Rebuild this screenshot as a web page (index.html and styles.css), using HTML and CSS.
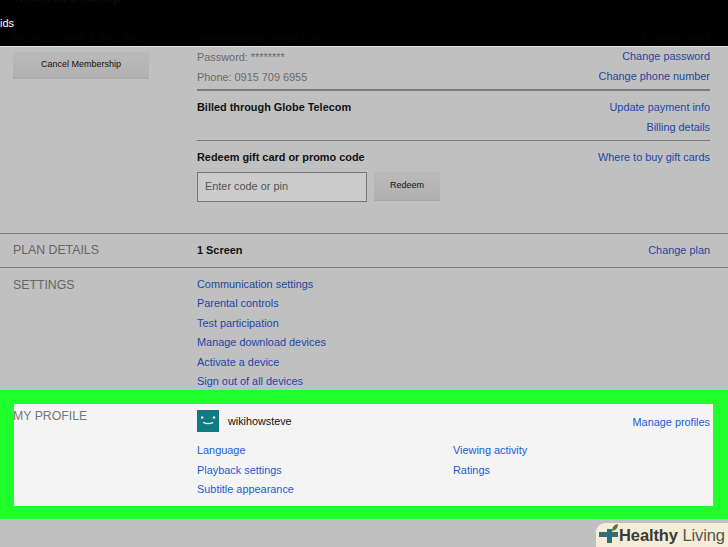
FILE: index.html
```html
<!DOCTYPE html>
<html lang="en">
<head>
<meta charset="utf-8">
<title>Account</title>
<link rel="stylesheet" href="styles.css">
</head>
<body>
<header class="topbar">
  <div class="topbar-title">Membership</div>
  <div class="topbar-kids">ids</div>
  <div class="topbar-ghost">
    <span class="ghost-label">MEMBERSHIP &amp; BILLING</span>
    <span class="ghost-email">wikihowsteve@gmail.com</span>
    <span class="ghost-link">Change email</span>
  </div>
</header>
<main class="page">
  <section class="row row-member">
    <div class="side"><button class="btn btn-cancel">Cancel Membership</button></div>
    <div class="main">
      <div class="pair pair-account">
        <div class="muted-lines"><p>Password: ********</p><p>Phone: 0915 709 6955</p></div>
        <div class="links right"><a>Change password</a><a>Change phone number</a></div>
      </div>
      <div class="pair pair-billed">
        <strong>Billed through Globe Telecom</strong>
        <div class="links right"><a>Update payment info</a><a>Billing details</a></div>
      </div>
      <div class="pair pair-redeem">
        <div>
          <strong class="redeem-title">Redeem gift card or promo code</strong>
          <div class="redeem-form">
            <div class="code-input">Enter code or pin</div>
            <button class="btn btn-redeem">Redeem</button>
          </div>
        </div>
        <div class="links right"><a>Where to buy gift cards</a></div>
      </div>
    </div>
  </section>
  <section class="row row-plan">
    <div class="side label">PLAN DETAILS</div>
    <div class="main pair"><strong>1 Screen</strong><div class="links right"><a>Change plan</a></div></div>
  </section>
  <section class="row row-settings">
    <div class="side label">SETTINGS</div>
    <div class="main links">
      <a>Communication settings</a><a>Parental controls</a><a>Test participation</a><a>Manage download devices</a><a>Activate a device</a><a>Sign out of all devices</a>
    </div>
  </section>
  <section class="highlight">
    <div class="panel">
      <div class="side label label-profile">MY PROFILE</div>
      <div class="main">
        <div class="pair profile-head">
          <div class="profile-id">
            <svg class="avatar" viewBox="0 0 22 22" aria-hidden="true">
              <rect width="22" height="22" fill="#0f7a80"/>
              <circle cx="5.2" cy="7.6" r="1.3" fill="#e8f4f4"/>
              <circle cx="17" cy="7.6" r="1.3" fill="#e8f4f4"/>
              <path d="M6.6 12.7Q11 14.6 15.8 12.7" fill="none" stroke="#f2f8f8" stroke-width="1.4" stroke-linecap="round"/>
            </svg>
            <span class="profile-name">wikihowsteve</span>
          </div>
          <div class="links right manage"><a>Manage profiles</a></div>
        </div>
        <div class="profile-links">
          <div class="links"><a>Language</a><a>Playback settings</a><a>Subtitle appearance</a></div>
          <div class="links"><a>Viewing activity</a><a>Ratings</a></div>
        </div>
      </div>
    </div>
  </section>
</main>
<aside class="badge">
  <svg class="badge-icon" viewBox="0 0 20 22" aria-hidden="true">
    <path d="M8 5h5v3h6v5h-6v6H8v-6H0V8h8z" fill="#2f6f78"/>
    <path d="M13 7Q13 1 19 0Q19 6 13 7z" fill="#4f7a3a"/>
  </svg>
  <span class="badge-text"><b>Healthy</b> Living</span>
</aside>
</body>
</html>
```
FILE: styles.css
```css
* { box-sizing: border-box; }
html, body { margin: 0; padding: 0; }
body {
  width: 728px;
  height: 547px;
  overflow: hidden;
  background: #c0c0c0;
  font-family: "Liberation Sans", Arial, sans-serif;
  font-size: 10.900px;
  color: #6a6a6a;
  position: relative;
}
p { margin: 0; }
a { color: #2146a6; display: block; }
strong { color: #111; font-weight: 700; display: block; }

.topbar {
  height: 47px;
  background: #000;
  border-bottom: 1px solid #e2e2e2;
  color: #fff;
  overflow: hidden;
}
.topbar-title { height: 15px; margin-top: -13px; padding-left: 13px; font-size: 20px; line-height: 16px; color: #0a0a0a; }
.topbar-kids { height: 16px; margin-top: 13px; font-size: 11px; line-height: 16px; }
.topbar-ghost { display: flex; margin-top: 0; padding: 0 18px 0 13px; color: #060606; line-height: 14px; }
.ghost-label { width: 184px; }
.ghost-link { margin-left: auto; }

.page { display: flex; flex-direction: column; }
.row { display: flex; padding: 0 18px 0 13px; }
.side { width: 184px; flex: none; }
.main { flex: 1; min-width: 0; }
.label { font-size: 12.300px; color: #666; line-height: 16px; }

.pair { display: flex; justify-content: space-between; align-items: flex-start; }
.links { line-height: 19.500px; }
.right { text-align: right; }

.btn {
  font-family: inherit;
  border: 0;
  color: #111;
  padding: 0;
  background: linear-gradient(#bababa, #b0b0b0);
  box-shadow: 0 1px 0 #a8a8a8;
  font-size: 9px;
}
.btn-cancel { width: 136px; height: 26px; margin-top: 5px; padding-bottom: 2px; }

.row-member { height: 186px; }
.pair-account { padding-top: 0; height: 44px; border-bottom: 2px solid #7b7b7b; line-height: 20px; }
.muted-lines p { line-height: 20px; }
.pair-billed { padding-top: 6px; height: 50px; border-bottom: 1px solid #7b7b7b; line-height: 20px; }
.pair-billed .links { line-height: 20px; }
.pair-billed strong { line-height: 20px; }
.pair-redeem { padding-top: 7px; line-height: 20px; }
.redeem-title { margin-top: -1px; }
.redeem-form { display: flex; align-items: flex-start; gap: 7px; margin-top: 5px; }
.code-input {
  width: 170px;
  height: 30px;
  padding-left: 7px;
  line-height: 27px;
  background: #cbcbcb;
  border: 1px solid #777;
  color: #555;
}
.btn-redeem { width: 66px; height: 28px; padding-bottom: 2px; }

.row-plan, .row-settings { border-top: 1px solid #7b7b7b; }
.row-plan { height: 34px; padding-top: 8px; margin-top: 0; line-height: 17px; }
.row-plan .links { line-height: 17px; }
.row-settings { height: 123px; padding-top: 6.700px; }
.row-settings .side { padding-top: 2px; }
.row-settings .links { line-height: 19.500px; }
.row-plan .side { line-height: 17px; }

.highlight { background: #1eff2c; height: 129px; padding: 14px 15px 13px 14px; }
.panel { display: flex; height: 102px; background: #f4f4f4; padding-right: 3px; }
.panel a { color: #1a5cd6; }
.label-profile { width: 183px; padding-top: 4px; color: #777; text-indent: -1px; overflow: hidden; }
.profile-head { padding-top: 6px; align-items: flex-start; }
.profile-id { display: flex; align-items: center; gap: 9px; }
.manage { padding-top: 3px; }
.avatar { width: 22px; height: 22px; display: block; }
.profile-name { color: #111; font-size: 10.800px; }
.profile-links { display: grid; grid-template-columns: 256px 1fr; margin-top: 8.800px; }

.badge {
  position: absolute;
  right: 0;
  bottom: 0;
  width: 132px;
  height: 24px;
  background: #f5edd8;
  border-radius: 9px 0 0 0;
  display: flex;
  align-items: center;
  padding-left: 3px;
  gap: 0;
}
.badge-icon { width: 20px; height: 22px; flex: none; }
.badge-text { font-size: 16.500px; color: #55554e; white-space: nowrap; letter-spacing: -0.1px; }
.badge-text b { color: #3a3a36; }
```
